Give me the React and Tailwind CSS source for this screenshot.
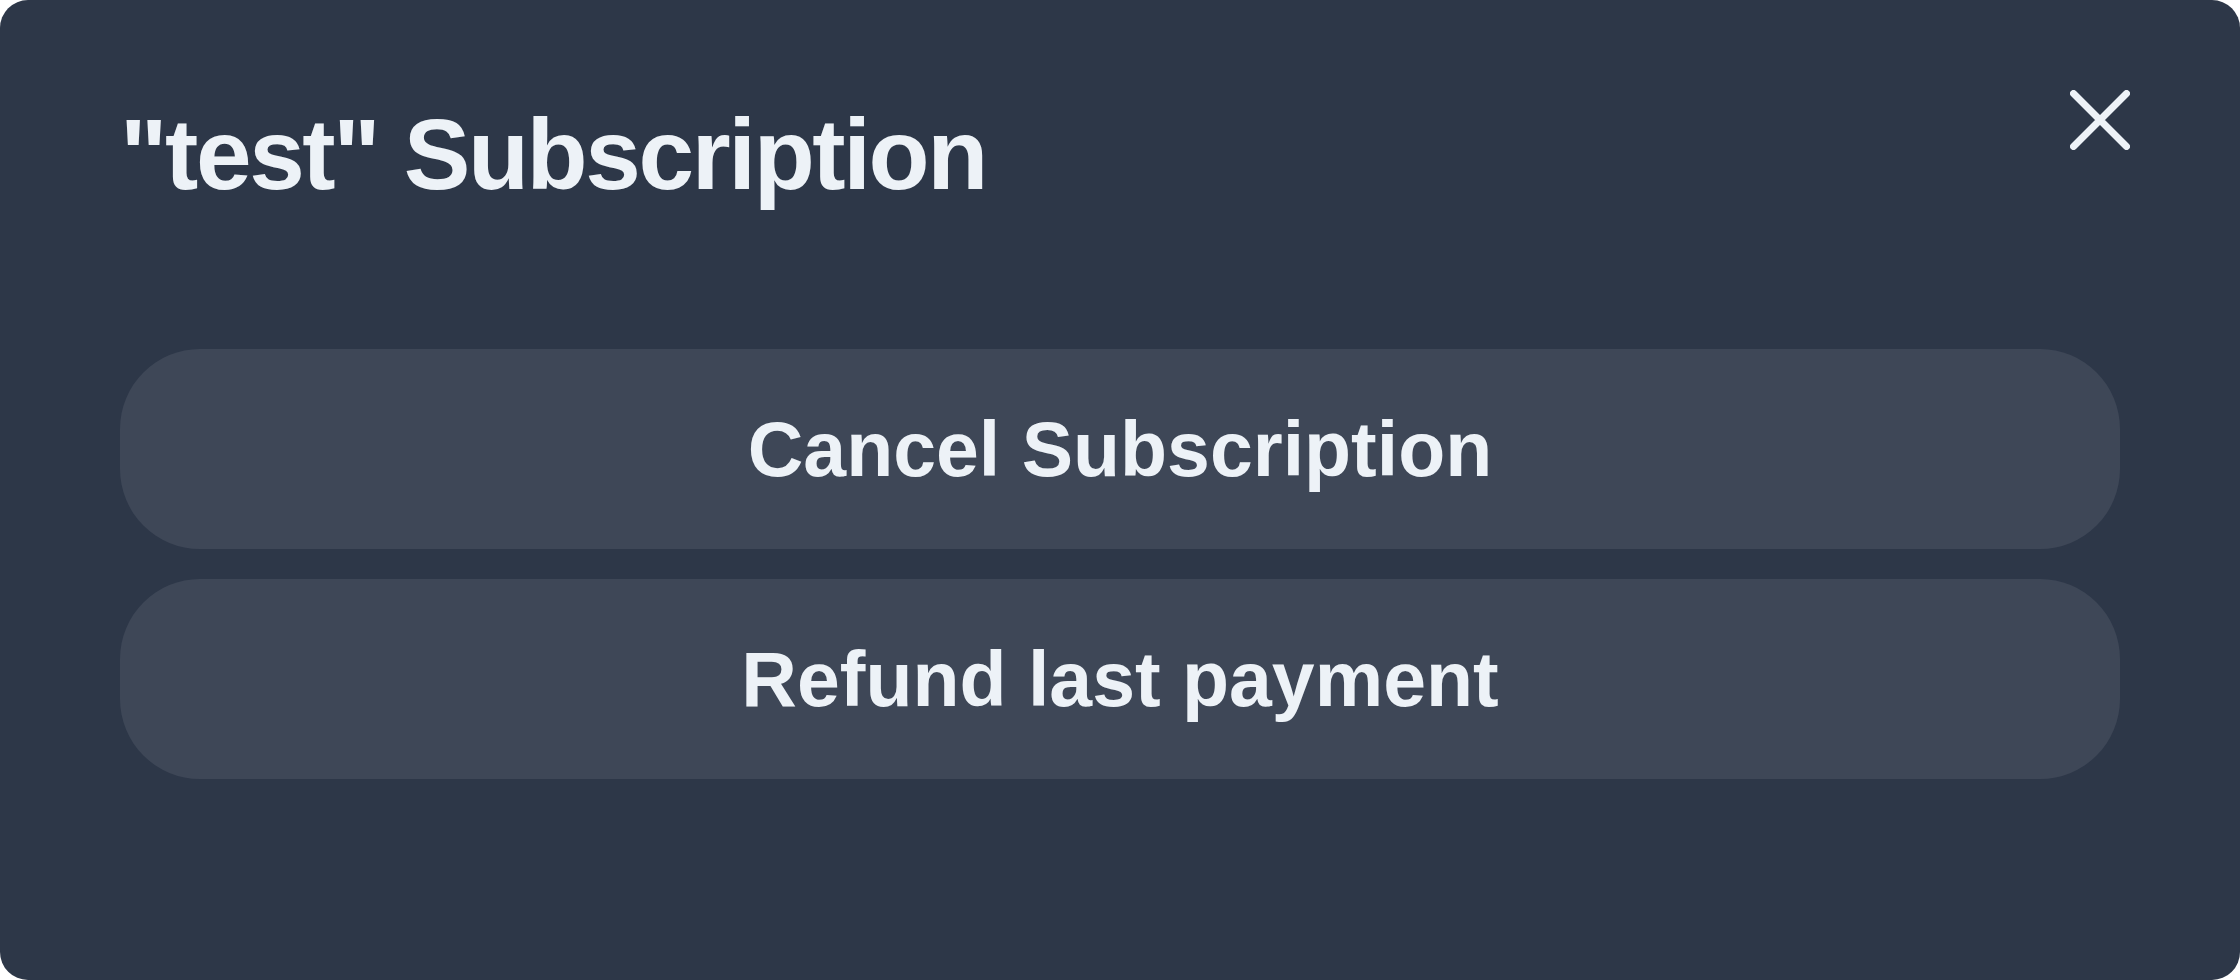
import React from "react";

const actions = ["Cancel Subscription", "Refund last payment"];

export default function App() {
  return (
    <div className="w-[2240px] h-[980px] bg-white">
      <div
        className="relative w-full h-full rounded-[28px] bg-[#2d3748] px-[120px] pt-[104px] text-[#edf2f7]"
        style={{ fontFamily: '"Liberation Sans", Arial, sans-serif' }}
      >
        <h2 className="text-[100px] leading-none font-bold tracking-[-2.4px]">
          "test" Subscription
        </h2>

        <button className="absolute top-[90px] right-[110px] w-[60px] h-[60px]">
          <svg width="60" height="60" viewBox="0 0 60 60" fill="none">
            <path
              d="M3.5 3.5 56.5 56.5M56.5 3.5 3.5 56.5"
              stroke="#edf2f7"
              strokeWidth="7"
              strokeLinecap="round"
            />
          </svg>
        </button>

        <div className="mt-[145px] flex flex-col gap-[30px]">
          {actions.map((label) => (
            <button
              key={label}
              className="h-[200px] w-full rounded-[80px] bg-[#3e4757] flex items-center justify-center text-[77px] leading-none font-bold"
            >
              {label}
            </button>
          ))}
        </div>
      </div>
    </div>
  );
}
